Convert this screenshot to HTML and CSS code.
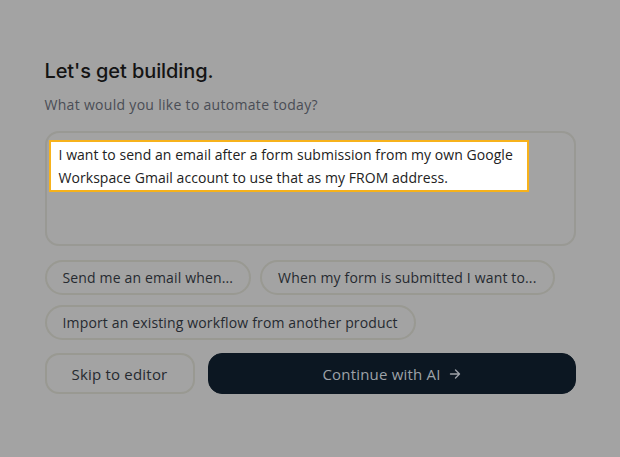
FILE: index.html
```html
<!DOCTYPE html>
<html lang="en">
<head>
<meta charset="utf-8">
<link rel="stylesheet" href="styles.css">
</head>
<body>
<main class="panel">
  <h1 class="title">Let's get building.</h1>
  <p class="subtitle">What would you like to automate today?</p>
  <div class="prompt">
    <div class="prompt-text highlight">I want to send an email after a form submission from my own Google Workspace Gmail account to use that as my FROM address.</div>
  </div>
  <div class="chips">
    <button class="chip">Send me an email when...</button>
    <button class="chip">When my form is submitted I want to...</button>
    <button class="chip">Import an existing workflow from another product</button>
  </div>
  <div class="actions">
    <button class="btn btn-secondary">Skip to editor</button>
    <button class="btn btn-primary">Continue with AI
      <svg class="arrow" width="12" height="12" viewBox="0 0 12 12" fill="none" stroke="currentColor" stroke-width="1.4" stroke-linecap="round" stroke-linejoin="round"><path d="M1.5 6h9M6.5 2l4 4-4 4"/></svg>
    </button>
  </div>
</main>
</body>
</html>
```
FILE: styles.css
```css
* { box-sizing: border-box; }
html, body { margin: 0; height: 100%; }
body {
  background: #a3a3a3;
  font-family: "Open Sans", "Liberation Sans", sans-serif;
  color: #222;
}
.panel {
  width: 531px;
  margin: 0 auto;
  padding-top: 59px;
  display: flex;
  flex-direction: column;
}
.title {
  margin: 0;
  font-family: Inter, "Liberation Sans", sans-serif;
  font-weight: 500;
  font-size: 20px;
  line-height: 24px;
  color: #141414;
  letter-spacing: -0.1px;
}
.subtitle {
  margin: 12px 0 0;
  font-size: 14px;
  line-height: 20px;
  color: #4a4d55;
  letter-spacing: 0.3px;
}
.prompt {
  margin-top: 16px;
  height: 115px;
  border: 2px solid #999994;
  border-radius: 14px;
  padding: 7px 2px;
}
.prompt-text {
  width: 480px;
  padding: 1px 2px 1px 8px;
  font-size: 14px;
  line-height: 23px;
  color: #222;
  letter-spacing: 0.05px;
}
.highlight {
  background: #fff;
  border: 2px solid #f7b21b;
}
.chips {
  margin-top: 14px;
  display: flex;
  flex-wrap: wrap;
  gap: 10px 9px;
}
.chip {
  font-family: "Open Sans", "Liberation Sans", sans-serif;
  font-size: 14px;
  color: #262a30;
  background: transparent;
  border: 2px solid #999992;
  border-radius: 999px;
  height: 35px;
  padding: 0 16px;
  letter-spacing: 0.15px;
}
.actions {
  margin-top: 13px;
  display: flex;
  gap: 13px;
}
.btn {
  height: 41px;
  border-radius: 14px;
  font-family: "Open Sans", "Liberation Sans", sans-serif;
  font-size: 15px;
  letter-spacing: 0.2px;
}
.btn-secondary {
  width: 150px;
  background: transparent;
  border: 2px solid #999992;
  color: #262a30;
}
.btn-primary {
  flex: 1;
  background: #0c1722;
  border: 1px solid #0c1722;
  color: #9ea2a8;
  display: flex;
  align-items: center;
  justify-content: center;
  gap: 8px;
}
.arrow { display: block; }
```
